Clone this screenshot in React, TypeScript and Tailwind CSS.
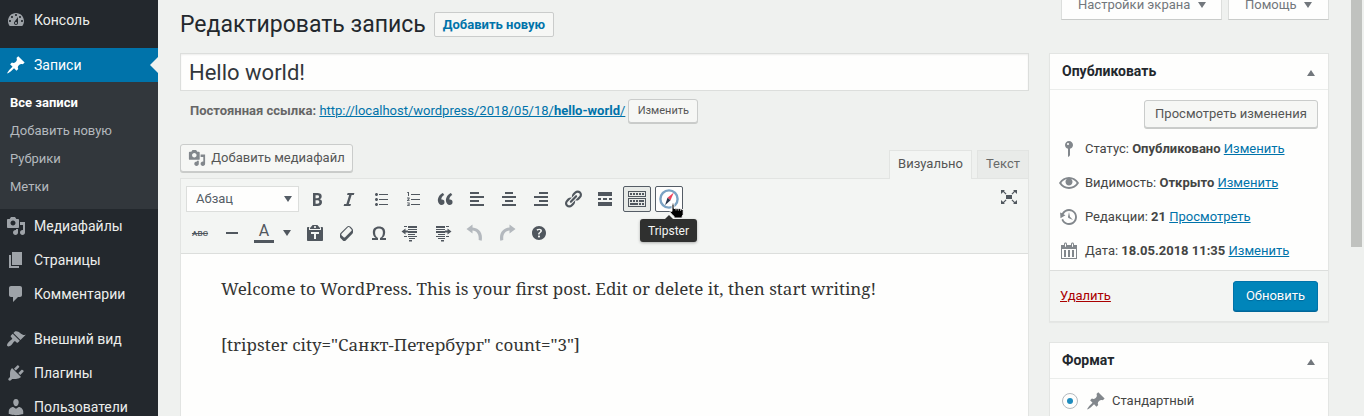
import React from "react";

const paths = {
  dashboard:
    "M3.76 16h12.48c1.1-1.37 1.76-3.11 1.76-5 0-4.42-3.58-8-8-8s-8 3.58-8 8c0 1.89.66 3.63 1.76 5zM10 4c.55 0 1 .45 1 1s-.45 1-1 1-1-.45-1-1 .45-1 1-1zM6 6c.55 0 1 .45 1 1s-.45 1-1 1-1-.45-1-1 .45-1 1-1zm8 0c.55 0 1 .45 1 1s-.45 1-1 1-1-.45-1-1 .45-1 1-1zm-5.37 5.55L12 7v6c0 1.1-.9 2-2 2s-2-.9-2-2c0-.57.24-1.08.63-1.45zM4 10c.55 0 1 .45 1 1s-.45 1-1 1-1-.45-1-1 .45-1 1-1zm12 0c.55 0 1 .45 1 1s-.45 1-1 1-1-.45-1-1 .45-1 1-1zm-5 3c0-.55-.45-1-1-1s-1 .45-1 1 .45 1 1 1 1-.45 1-1z",
  post: "M10.44 3.02l1.82-1.82 6.36 6.35-1.83 1.82c-1.05-.68-2.48-.57-3.41.36l-.75.75c-.92.93-1.04 2.35-.35 3.41l-1.83 1.82-2.41-2.41-2.8 2.79c-.42.42-3.38 2.71-3.8 2.29s1.86-3.39 2.28-3.81l2.79-2.79L4.1 9.36l1.83-1.82c1.05.69 2.48.57 3.4-.36l.75-.75c.93-.92 1.05-2.35.36-3.41z",
  media:
    "M13 11V4c0-.55-.45-1-1-1h-1.67L9 1H5L3.67 3H2c-.55 0-1 .45-1 1v7c0 .55.45 1 1 1h10c.55 0 1-.45 1-1zM7 4.5c1.38 0 2.5 1.12 2.5 2.5S8.38 9.5 7 9.5 4.5 8.38 4.5 7 5.62 4.5 7 4.5zM14 6h5v10.5c0 1.38-1.12 2.5-2.5 2.5S14 17.88 14 16.5s1.12-2.5 2.5-2.5c.17 0 .34.02.5.05V9h-3V6zm-4 8.05V13h2v3.5c0 1.38-1.12 2.5-2.5 2.5S7 17.88 7 16.5 8.12 14 9.5 14c.17 0 .34.02.5.05z",
  page: "M6 15V2h10v13H6zm-1 1h8v2H3V5h2v11z",
  comments:
    "M5 2h9c1.1 0 2 .9 2 2v7c0 1.1-.9 2-2 2h-2l-5 5v-5H5c-1.1 0-2-.9-2-2V4c0-1.1.9-2 2-2z",
  appearance:
    "M14.48 11.06L7.41 3.99l1.5-1.5c.5-.56 2.3-.47 3.51.32 1.21.8 1.43 1.28 2.91 2.1 1.18.64 2.45 1.26 4.45.85zm-.71.71L6.7 4.7 4.93 6.47c-.39.39-.39 1.02 0 1.41l1.06 1.06c.39.39.39 1.03 0 1.42-.6.6-1.43 1.11-2.21 1.69-.35.26-.7.53-1.01.84C1.43 14.23.4 16.08 1.4 17.07c.99 1 2.84-.03 4.18-1.36.31-.31.58-.66.85-1.02.57-.78 1.08-1.61 1.69-2.21.39-.39 1.02-.39 1.41 0l1.06 1.06c.39.39 1.02.39 1.41 0z",
  plugins:
    "M13.11 4.36L9.87 7.6 8 5.73l3.24-3.24c.35-.34 1.05-.2 1.56.32.52.51.66 1.21.31 1.55zm-8 1.77l.91-1.12 9.01 9.01-1.19.84c-.71.71-2.63 1.16-3.82 1.16H6.14L4.9 17.26c-.59.59-1.54.59-2.12 0-.59-.58-.59-1.53 0-2.12l1.24-1.24v-3.88c0-1.13.4-3.19 1.09-3.89zm7.26 3.97l3.24-3.24c.34-.35 1.04-.21 1.55.31.52.51.66 1.21.31 1.55l-3.24 3.25z",
  users:
    "M10 9.25c-2.27 0-2.73-3.44-2.73-3.44C7 4.02 7.82 2 9.97 2c2.16 0 2.98 2.02 2.71 3.81 0 0-.41 3.44-2.68 3.44zm0 2.57L12.72 10c2.39 0 4.52 2.33 4.52 4.53v2.49s-3.65 1.13-7.24 1.13c-3.65 0-7.24-1.13-7.24-1.13v-2.49c0-2.25 1.94-4.48 4.47-4.48z",
  bold: "M6 4v13h4.54c1.37 0 2.46-.33 3.26-1 .8-.66 1.2-1.58 1.2-2.77 0-.84-.17-1.51-.51-2.01s-.9-.85-1.67-1.03v-.09c.57-.1 1.02-.4 1.36-.9s.51-1.13.51-1.91c0-1.14-.39-1.98-1.17-2.5C12.75 4.26 11.5 4 9.78 4H6zm2.57 5.15V6.26h1.36c.73 0 1.27.11 1.61.32.34.22.51.58.51 1.07 0 .54-.16.92-.47 1.15s-.82.35-1.51.35h-1.5zm0 2.19h1.6c1.44 0 2.16.53 2.16 1.61 0 .6-.17 1.05-.51 1.34s-.86.43-1.57.43H8.57v-3.38z",
  italic: "M14.78 6h-2.13l-2.8 9h2.12l-.62 2H4.6l.62-2h2.14l2.8-9H8.03l.62-2h6.75z",
  ul: "M5.5 7C4.67 7 4 6.33 4 5.5 4 4.68 4.67 4 5.5 4 6.32 4 7 4.68 7 5.5 7 6.33 6.32 7 5.5 7zM8 5h9v1H8V5zm-2.5 7c-.83 0-1.5-.67-1.5-1.5C4 9.68 4.67 9 5.5 9c.82 0 1.5.68 1.5 1.5 0 .83-.68 1.5-1.5 1.5zM8 10h9v1H8v-1zm-2.5 7c-.83 0-1.5-.67-1.5-1.5 0-.82.67-1.5 1.5-1.5.82 0 1.5.68 1.5 1.5 0 .83-.68 1.5-1.5 1.5zM8 15h9v1H8v-1z",
  ol: "M5 3h1v4H5V4H4v-.6zM8 5h9v1H8zM4 8.5h2.6V10L5.2 11.2h1.4v.9H4v-.9l1.6-1.4v-.4H4zM8 10h9v1H8zM4 13.4h2.6V17H4v-.8h1.6v-.6H4.4v-.7h1.2v-.6H4zM8 15h9v1H8z",
  quote:
    "M9.49 13.22c0-.74-.2-1.38-.61-1.9-.62-.78-1.83-.88-2.53-.72-.29-1.65 1.11-3.75 2.92-4.65L7.88 4c-2.73 1.3-5.42 4.28-4.96 8.05C3.21 14.43 4.59 16 6.54 16c.85 0 1.56-.25 2.12-.75s.83-1.18.83-2.03zm8.05 0c0-.74-.2-1.38-.61-1.9-.63-.78-1.83-.88-2.53-.72-.29-1.65 1.11-3.75 2.92-4.65L15.93 4c-2.73 1.3-5.41 4.28-4.95 8.05.29 2.38 1.66 3.95 3.61 3.95.85 0 1.56-.25 2.12-.75s.83-1.18.83-2.03z",
  left: "M12 5V3H3v2h9zm5 4V7H3v2h14zm-5 4v-2H3v2h9zm5 4v-2H3v2h14z",
  center: "M14 5V3H6v2h8zm3 4V7H3v2h14zm-3 4v-2H6v2h8zm3 4v-2H3v2h14z",
  right: "M17 5V3H8v2h9zm0 4V7H3v2h14zm0 4v-2H8v2h9zm0 4v-2H3v2h14z",
  link: "M17.74 2.76c1.68 1.69 1.68 4.41 0 6.1l-1.53 1.52c-1.12 1.12-2.7 1.47-4.14 1.09l2.62-2.61.76-.77.76-.76c.84-.84.84-2.2 0-3.04-.84-.85-2.2-.85-3.04 0l-.77.76-3.38 3.38c-.37-1.44-.02-3.02 1.1-4.14l1.52-1.53c1.69-1.68 4.42-1.68 6.1 0zM8.59 13.43l5.34-5.34c.42-.42.42-1.1 0-1.52-.44-.43-1.13-.39-1.53 0l-5.33 5.34c-.42.42-.42 1.1 0 1.52.44.43 1.13.39 1.52 0zm-.76 2.29l4.14-4.15c.38 1.44.03 3.02-1.09 4.14l-1.52 1.53c-1.69 1.68-4.41 1.68-6.1 0-1.68-1.68-1.68-4.42 0-6.1l1.53-1.52c1.12-1.12 2.7-1.47 4.14-1.1l-4.14 4.15c-.85.84-.85 2.2 0 3.05.84.84 2.2.84 3.04 0z",
  more: "M17 7V3H3v4h14zM6 11V9H3v2h3zm6 0V9H8v2h4zm5 0V9h-3v2h3zm0 6v-4H3v4h14z",
  sink: "M19 2v6H1V2h18zm-1 5V3H2v4h16zM5 4v2H3V4h2zm3 0v2H6V4h2zm3 0v2H9V4h2zm3 0v2h-2V4h2zm3 0v2h-2V4h2zm2 5v9H1V9h18zm-1 8v-7H2v7h16zM5 11v2H3v-2h2zm3 0v2H6v-2h2zm3 0v2H9v-2h2zm6 0v2h-5v-2h5zm-6 3v2H3v-2h8zm3 0v2h-2v-2h2zm3 0v2h-2v-2h2z",
  hr: "M4 9h12v2H4z",
  paste:
    "M12.38 2L15 5v1H5V5l2.64-3h4.74zM10 5c.55 0 1-.44 1-1 0-.55-.45-1-1-1s-1 .45-1 1c0 .56.45 1 1 1zm5.45-1H17c.55 0 1 .45 1 1v12c0 .56-.45 1-1 1H3c-.55 0-1-.44-1-1V5c0-.55.45-1 1-1h1.55L4 4.63V7h12V4.63zM14 11V9H6v2h3v5h2v-5h3z",
  eraser:
    "M14.29 4.59l1.1 1.11c.41.4.61.94.61 1.47v2.12c0 .53-.2 1.07-.61 1.47l-6.63 6.63c-.4.41-.94.61-1.47.61s-1.07-.2-1.47-.61l-1.11-1.1-1.1-1.11c-.41-.4-.61-.94-.61-1.47v-2.12c0-.54.2-1.07.61-1.48l6.63-6.62c.4-.41.94-.61 1.47-.61s1.06.2 1.47.61zm-6.21 9.7l6.42-6.42c.39-.39.39-1.03 0-1.43L12.36 4.3c-.19-.19-.45-.29-.72-.29s-.52.1-.71.29l-6.42 6.42c-.39.4-.39 1.04 0 1.43l2.14 2.14c.38.38 1.04.38 1.43 0z",
  omega:
    "M10 5.4c1.27 0 2.24.36 2.91 1.08.66.71 1 1.76 1 3.13 0 1.28-.23 2.37-.69 3.27-.47.89-1.27 1.52-2.22 2.12v2h6v-2h-3.69c.92-.64 1.62-1.34 2.12-2.34.49-1.01.74-2.13.74-3.35 0-1.78-.55-3.19-1.65-4.22S11.92 3.54 10 3.54s-3.43.53-4.52 1.57c-1.1 1.04-1.65 2.44-1.65 4.2 0 1.21.24 2.31.73 3.33.48 1.01 1.19 1.71 2.1 2.36H3v2h6v-2c-.98-.64-1.8-1.28-2.24-2.17-.45-.89-.67-1.96-.67-3.22 0-1.37.33-2.41 1-3.13C7.75 5.76 8.72 5.4 10 5.4z",
  outdent:
    "M3 3h3v1H3zM7 3h9v2H7zM7 6h9v1H7zM7 8h9v2H7zM7 11h7v1H7zM3 13h3v1H3zM7 13h9v1H7zM8 15h6v1H8zM8 17h3v1.500H8zM.5 8.500l4-3v2H7v2H4.500v2z",
  indent:
    "M13 3h3v1h-3zM3 3h9v2H3zM3 6h9v1H3zM3 8h9v2H3zM5 11h7v1H5zM13 13h3v1h-3zM3 13h9v1H3zM5 15h7v1H5zM8 17h3v1.500H8zM18.500 8.500l-4-3v2H12v2h2.500v2z",
  undo: "M7.5 1.5L1.5 6l6 4.500V7.500c4.200.4 6.800 3.500 6.200 9.500l3 .8C18.200 10.500 14.400 5 7.500 4.500z",
  redo: "M12.500 1.500l6 4.500-6 4.500V7.500C8.300 7.900 5.700 11 6.300 17l-3 .8C1.800 10.500 5.600 5 12.500 4.500z",
  help: "M17 10c0-3.87-3.14-7-7-7-3.87 0-7 3.13-7 7s3.13 7 7 7c3.86 0 7-3.13 7-7zm-6.3 1.48H9.14v-.43c0-.38.08-.7.24-.98s.46-.57.88-.89c.41-.29.68-.53.81-.71.14-.18.2-.39.2-.62 0-.25-.09-.44-.28-.58-.19-.13-.45-.19-.79-.19-.58 0-1.25.19-2 .57l-.64-1.28c.87-.49 1.8-.74 2.77-.74.81 0 1.45.2 1.92.58.48.39.71.91.71 1.55 0 .43-.09.8-.29 1.11-.19.32-.57.67-1.11 1.06-.38.28-.61.49-.71.63-.1.15-.15.34-.15.57v.35zm-1.47 2.74c-.18-.17-.27-.42-.27-.73 0-.33.08-.58.26-.75s.43-.25.77-.25c.32 0 .57.09.75.26s.27.42.27.74c0 .3-.09.55-.27.72-.18.18-.43.27-.75.27-.33 0-.58-.09-.76-.26z",
  expand:
    "M7 8h6v4H7zM2 3h4L4.900 4.100 7.500 6.700 6.700 7.500 4.100 4.900 2 7zM18 3v4l-2.100-2.100-2.600 2.600-.8-.8 2.600-2.600L14 3zM2 17v-4l2.100 2.100 2.600-2.600.8.8-2.600 2.600L6 17zM18 17h-4l1.100-1.100-2.600-2.600.8-.8 2.600 2.600L18 13z",
  status:
    "M14 6c0 1.86-1.28 3.41-3 3.86V16c0 1-2 2-2 2V9.860c-1.72-.45-3-2-3-3.86 0-2.21 1.79-4 4-4s4 1.79 4 4zM8 5c0 .55.45 1 1 1s1-.45 1-1-.45-1-1-1-1 .45-1 1z",
  eye: "M19.700 9.400C17.700 6 14 3.900 10 3.900S2.300 6 .3 9.400L0 10l.3.6c2 3.400 5.700 5.500 9.700 5.500s7.700-2.100 9.700-5.500l.3-.6zM10 14.100c-3.100 0-6-1.600-7.700-4.100C3.600 8 5.700 6.600 8 6.100c-.9.6-1.500 1.700-1.500 2.900 0 1.900 1.600 3.500 3.500 3.500s3.500-1.600 3.500-3.500c0-1.200-.6-2.300-1.500-2.900 2.300.5 4.400 1.900 5.700 3.900-1.700 2.500-4.600 4.100-7.700 4.100z",
  backup:
    "M13.65 2.88c3.93 2.01 5.48 6.84 3.47 10.77s-6.83 5.48-10.77 3.47c-1.87-.96-3.2-2.56-3.86-4.4l1.64-1.03c.45 1.57 1.52 2.95 3.08 3.76 3.01 1.54 6.69.35 8.23-2.66 1.55-3.01.36-6.69-2.65-8.24C9.78 3.01 6.1 4.2 4.56 7.21l1.88.97-4.95 3.08-.39-5.82 1.78.91C4.9 2.4 9.75.89 13.65 2.88zm-4.36 7.83C9.11 10.53 9 10.28 9 10c0-.07.03-.12.04-.19h-.01L10 5l.97 4.81L14 13l-4.5-2.12.02-.02c-.08-.04-.16-.09-.23-.15z",
  calendar:
    "M15 4h3v14H2V4h3V3c0-.83.67-1.5 1.5-1.5S8 2.170 8 3v1h4V3c0-.83.67-1.5 1.5-1.5S15 2.170 15 3v1zM6 3v2.500c0 .28.22.5.5.5s.5-.22.5-.5V3c0-.28-.22-.5-.5-.5S6 2.720 6 3zm7 0v2.500c0 .28.22.5.5.5s.5-.22.5-.5V3c0-.28-.22-.5-.5-.5s-.5.22-.5.5zm4 14V8H3v9h14zM7 16V9H5v7h2zm4 0V9H9v7h2zm4 0V9h-2v7h2z",
};

type IconName = keyof typeof paths;

function Icon({ name, className = "size-5" }: { name: IconName; className?: string }) {
  return (
    <svg viewBox="0 0 20 20" fill="currentColor" fillRule="evenodd" className={`shrink-0 ${className}`}>
      <path d={paths[name]} />
    </svg>
  );
}

function Caret({ up = false, className = "" }: { up?: boolean; className?: string }) {
  return (
    <svg viewBox="0 0 8 6" fill="currentColor" className={`h-[6px] w-[8px] shrink-0 ${className}`}>
      <path d={up ? "M4 0l4 6H0z" : "M0 0h8L4 6z"} />
    </svg>
  );
}

function MenuItem({ icon, label, active = false }: { icon: IconName; label: string; active?: boolean }) {
  return (
    <a
      className={`relative flex h-[34px] items-center text-[14px] ${
        active ? "bg-[#0073aa] text-white" : "text-[#eceeec]"
      }`}
    >
      <span className={`flex w-[34px] pl-[6px] ${active ? "text-white" : "text-[#9ea3a8]"}`}>
        <Icon name={icon} />
      </span>
      {label}
      {active && (
        <span className="absolute right-0 top-[9px] border-y-8 border-r-8 border-y-transparent border-r-[#eff1ef]" />
      )}
    </a>
  );
}

function Tool({ name, dim = false, pressed = false }: { name: IconName; dim?: boolean; pressed?: boolean }) {
  return (
    <span
      className={`flex h-[26px] w-7 items-center justify-center rounded-[2px] ${
        dim ? "text-[#b4b9be]" : "text-[#50575e]"
      } ${pressed ? "border border-[#555d66] bg-[#e7eae7]" : ""}`}
    >
      <Icon name={name} />
    </span>
  );
}

function Compass() {
  return (
    <svg viewBox="0 0 20 20" className="size-5 shrink-0">
      <circle cx="10" cy="10" r="8.600" fill="#fff" stroke="#7ba3c4" strokeWidth="2.400" />
      <path d="M14.800 3.500L8.500 8.800l3 2.400z" fill="#f0435c" />
      <path d="M6 16.200L8.500 8.800l3 2.400z" fill="#26344a" />
    </svg>
  );
}

function HandCursor() {
  return (
    <svg viewBox="0 0 15 16" className="absolute left-[13px] top-[16px] z-20 h-[16px] w-[15px]">
      <path
        d="M3 2Q3 .6 4 .6T5 2v3.600l2-.4 1.600.5 1.600-.2 1.600.6 1.200 0 1.200 1v4.400l-1 1.800v1.700H5v-1.600L3 11.400.8 9q.2-1.500 2.200-.6z"
        fill="#000"
        stroke="#fff"
        strokeWidth=".9"
      />
      <path d="M7 6v1.500M9.300 6.200v1.500M11.600 6.400v1.500" stroke="#fff" strokeWidth=".7" />
    </svg>
  );
}

function Button({ children, className }: { children: React.ReactNode; className: string }) {
  return (
    <span
      className={`flex items-center justify-center rounded-[3px] border border-[#cacccb] bg-[#f6f7f5] text-[#555655] shadow-[0_1px_0_#c9cbc9] ${className}`}
    >
      {children}
    </span>
  );
}

function Link({ children }: { children: React.ReactNode }) {
  return <a className="text-[#0073aa] underline">{children}</a>;
}

function InfoRow({ icon, children }: { icon: IconName; children: React.ReactNode }) {
  return (
    <div className="flex h-[34px] items-center whitespace-pre pl-[9px] text-[13px] text-[#444544]">
      <span className="mr-[6px] flex text-[#82878c]">
        <Icon name={icon} />
      </span>
      <span>{children}</span>
    </div>
  );
}

function PanelHead({ children }: { children: React.ReactNode }) {
  return (
    <div className="flex h-[36px] shrink-0 items-center justify-between border-b border-[#ebedeb] pl-3 pr-[13px] text-[14px] font-bold text-[#23282d]">
      {children}
      <Caret up className="mt-[3px] text-[#72777c]" />
    </div>
  );
}

export default function App() {
  return (
    <div className="flex h-[416px] w-[1364px] overflow-hidden bg-[#eff1ef] font-[Roboto,sans-serif] text-[13px] text-[#444544]">
      <nav className="h-full w-[158px] shrink-0 bg-[#23282d] pt-[3px]">
        <MenuItem icon="dashboard" label="Консоль" />
        <div className="h-[11px]" />
        <MenuItem icon="post" label="Записи" active />
        <div className="flex h-[127px] flex-col bg-[#32373c] pl-[10px] pt-[7px] text-[13px] text-[#b4b9be]">
          <a className="flex h-7 items-center font-bold text-white">Все записи</a>
          <a className="flex h-7 items-center">Добавить новую</a>
          <a className="flex h-7 items-center">Рубрики</a>
          <a className="flex h-7 items-center">Метки</a>
        </div>
        <MenuItem icon="media" label="Медиафайлы" />
        <MenuItem icon="page" label="Страницы" />
        <MenuItem icon="comments" label="Комментарии" />
        <div className="h-[11px]" />
        <MenuItem icon="appearance" label="Внешний вид" />
        <MenuItem icon="plugins" label="Плагины" />
        <MenuItem icon="users" label="Пользователи" />
      </nav>

      <main className="ml-[22px] flex h-full w-[849px] shrink-0 flex-col">
        <header className="flex h-[53px] items-start">
          <h1 className="mt-[9px] w-[254px] whitespace-nowrap text-[23px] leading-[32px] text-[#23282d]">Редактировать запись</h1>
          <a className="mt-[12px] flex h-[25px] w-[120px] items-center justify-center rounded-[2px] border border-[#cacccb] bg-[#f6f7f5] text-[13px] font-bold text-[#0073aa]">
            Добавить новую
          </a>
        </header>
        <div className="flex h-[38px] items-center border border-[#dcdedc] bg-[#fefefd] pl-[8px] text-[22px] text-[#32373c] shadow-[inset_0_1px_2px_rgba(0,0,0,0.07)]">
          Hello world!
        </div>
        <div className="mt-[7px] flex h-[26px] items-center whitespace-pre pl-[10px] text-[13px] text-[#666]">
          <span>
            <b>Постоянная ссылка: </b>
            <Link>
              http://localhost/wordpress/2018/05/18/<b>hello-world</b>/
            </Link>
          </span>
          <Button className="ml-[3px] h-[24px] w-[70px] text-[11px]">Изменить</Button>
        </div>
        <div className="mt-5 flex h-[34px] items-start justify-between">
          <Button className="h-[28px] w-[173px] gap-[5px] text-[13px]">
            <Icon name="media" className="size-[18px] text-[#82878c]" />
            Добавить медиафайл
          </Button>
          <div className="z-10 mt-[6px] flex gap-[5px] text-[13px] text-[#555655]">
            <span className="flex h-[29px] w-[83px] items-center justify-center border border-b-0 border-[#e2e4e2] bg-[#f3f5f3] pb-[2px]">
              Визуально
            </span>
            <span className="flex h-[28px] w-[52px] items-center justify-center border border-b-0 border-[#e2e4e2] bg-[#e9ebe9] pb-px text-[#686a69]">
              Текст
            </span>
          </div>
        </div>
        <section className="flex flex-1 flex-col border border-b-0 border-[#e2e4e2] bg-[#fefefd]">
          <div className="flex h-[75px] flex-col border-b border-[#dcdedc] bg-[#f3f5f3] pl-[5px] pt-[7px] text-[#50575e]">
            <div className="flex h-[34px] items-start">
              <div className="mr-1 flex h-[26px] w-[113px] items-center justify-between border border-[#dcdedc] bg-[#fefefd] pl-[9px] pr-[6px] text-[13px] text-[#555d66]">
                Абзац
                <Caret />
              </div>
              <div className="flex gap-1">
                <Tool name="bold" />
                <Tool name="italic" />
                <Tool name="ul" />
                <Tool name="ol" />
                <Tool name="quote" />
                <Tool name="left" />
                <Tool name="center" />
                <Tool name="right" />
                <Tool name="link" />
                <Tool name="more" />
                <Tool name="sink" pressed />
                <span className="relative flex h-[26px] w-7 items-center justify-center rounded-[2px] border border-[#555d66] bg-[#fefefd]">
                  <Compass />
                  <HandCursor />
                  <span className="absolute left-[8px] top-[28px] border-x-[5px] border-b-[5px] border-x-transparent border-b-[#2f302f]" />
                  <span className="absolute left-[-16px] top-[32px] flex h-[23px] w-[57px] items-center justify-center rounded-[3px] bg-[#2f302f] text-[12px] text-[#f4f5f3] shadow-[0_1px_3px_rgba(0,0,0,0.3)]">
                    Tripster
                  </span>
                </span>
              </div>
              <div className="ml-auto mr-[5px] mt-[-2px]">
                <Tool name="expand" />
              </div>
            </div>
            <div className="flex gap-1">
              <span className="flex h-[26px] w-7 items-center justify-center pt-px text-[8px] font-medium tracking-[0.2px] line-through">
                ABC
              </span>
              <Tool name="hr" />
              <span className="flex h-[26px] w-[52px] items-center">
                <span className="ml-[4px] flex w-5 flex-col items-center text-[16px] leading-[16px]">
                  A
                  <span className="mt-px h-[3px] w-5 bg-[#50575e]" />
                </span>
                <Caret className="ml-[9px]" />
              </span>
              <span className="-ml-[5px] flex gap-1">
                <Tool name="paste" />
                <Tool name="eraser" />
                <Tool name="omega" />
                <Tool name="outdent" />
                <Tool name="indent" />
                <Tool name="undo" dim />
                <Tool name="redo" dim />
                <Tool name="help" />
              </span>
            </div>
          </div>
          <div className="whitespace-nowrap pl-10 pt-[21px] font-['Noto_Serif','Droid_Serif','DejaVu_Serif',serif] text-[17px] leading-[28px] text-[#333433]">
            <p className="mb-7">Welcome to WordPress. This is your first post. Edit or delete it, then start writing!</p>
            <p>[tripster city="Санкт-Петербург" count="3"]</p>
          </div>
        </section>
      </main>

      <aside className="ml-5 flex h-full w-[280px] shrink-0 flex-col">
        <div className="flex h-[20px] shrink-0 justify-end gap-[6px] text-[13px] text-[#72777c]">
          <span className="flex h-[20px] w-[161px] items-center justify-between border border-t-0 border-[#dcdedc] border-b-[#c9cbc9] bg-[#fefefd] pb-[9px] pl-4 pr-[15px]">
            Настройки экрана
            <Caret />
          </span>
          <span className="flex h-[20px] w-[101px] items-center justify-between border border-t-0 border-[#dcdedc] border-b-[#c9cbc9] bg-[#fefefd] pb-[9px] pl-4 pr-[16px]">
            Помощь
            <Caret />
          </span>
        </div>
        <section className="mt-[33px] flex h-[269px] shrink-0 flex-col border border-[#e3e5e3] bg-[#fefefd] shadow-[0_1px_1px_rgba(0,0,0,0.04)]">
          <PanelHead>Опубликовать</PanelHead>
          <div className="flex h-[42px] justify-end pr-[10px] pt-[10px]">
            <Button className="h-[28px] w-[174px] text-[13px]">Просмотреть изменения</Button>
          </div>
          <InfoRow icon="status">
            Статус: <b>Опубликовано</b> <Link>Изменить</Link>
          </InfoRow>
          <InfoRow icon="eye">
            Видимость: <b>Открыто</b> <Link>Изменить</Link>
          </InfoRow>
          <InfoRow icon="backup">
            Редакции: <b>21</b> <Link>Просмотреть</Link>
          </InfoRow>
          <InfoRow icon="calendar">
            Дата: <b>18.05.2018 11:35</b> <Link>Изменить</Link>
          </InfoRow>
          <div className="mt-auto flex h-[51px] items-center justify-between border-t border-[#dcdedc] bg-[#f3f5f3] px-[10px]">
            <a className="mb-px text-[13px] text-[#a00] underline">Удалить</a>
            <span className="flex h-[30px] w-[85px] items-center justify-center rounded-[3px] border border-[#0073aa] bg-[#0085ba] text-[13px] text-white shadow-[0_1px_0_#006799] [text-shadow:0_1px_1px_#006799]">
              Обновить
            </span>
          </div>
        </section>
        <section className="mt-5 flex h-[100px] shrink-0 flex-col border border-[#e3e5e3] bg-[#fefefd]">
          <PanelHead>Формат</PanelHead>
          <div className="flex h-[44px] items-center pl-3">
            <span className="flex size-4 items-center justify-center rounded-full border border-[#b4b9be] bg-[#fefefd]">
              <span className="size-[6px] rounded-full bg-[#1e8cbe]" />
            </span>
            <Icon name="post" className="ml-[8px] size-5 text-[#82878c]" />
            <span className="ml-[6px]">Стандартный</span>
          </div>
        </section>
      </aside>
      <div className="ml-[22px] h-[247px] w-[11px] bg-[#c0c2bf]" />
    </div>
  );
}
